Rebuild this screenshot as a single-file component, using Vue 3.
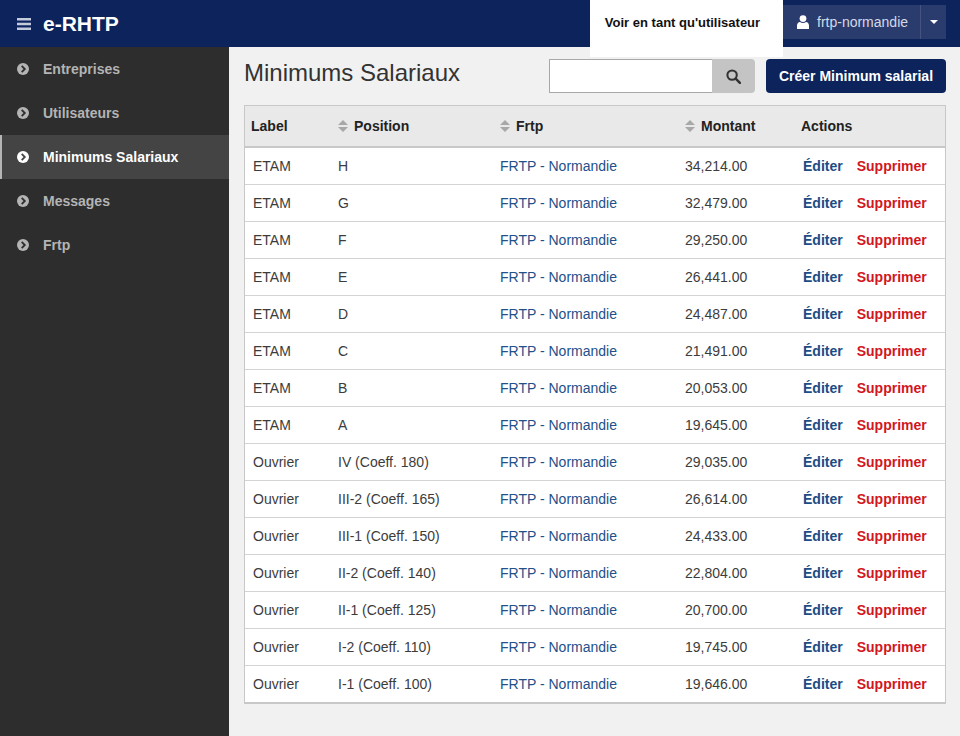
<script setup>
const navItems = [
  { label: 'Entreprises' },
  { label: 'Utilisateurs' },
  { label: 'Minimums Salariaux', active: true },
  { label: 'Messages' },
  { label: 'Frtp' },
]

const rows = [
  ['ETAM', 'H', '34,214.00'],
  ['ETAM', 'G', '32,479.00'],
  ['ETAM', 'F', '29,250.00'],
  ['ETAM', 'E', '26,441.00'],
  ['ETAM', 'D', '24,487.00'],
  ['ETAM', 'C', '21,491.00'],
  ['ETAM', 'B', '20,053.00'],
  ['ETAM', 'A', '19,645.00'],
  ['Ouvrier', 'IV (Coeff. 180)', '29,035.00'],
  ['Ouvrier', 'III-2 (Coeff. 165)', '26,614.00'],
  ['Ouvrier', 'III-1 (Coeff. 150)', '24,433.00'],
  ['Ouvrier', 'II-2 (Coeff. 140)', '22,804.00'],
  ['Ouvrier', 'II-1 (Coeff. 125)', '20,700.00'],
  ['Ouvrier', 'I-2 (Coeff. 110)', '19,745.00'],
  ['Ouvrier', 'I-1 (Coeff. 100)', '19,646.00'],
]
</script>

<template>
  <div class="app">
    <header class="topbar">
      <div class="brand">
        <svg class="burger" viewBox="0 0 14 12" width="14" height="12">
          <path d="M0 0h14v2.400H0zM0 4.800h14v2.400H0zM0 9.600h14V12H0z" fill="#c6cbdb" />
        </svg>
        <span class="brand__name">e-RHTP</span>
      </div>
      <a class="impersonate">Voir en tant qu'utilisateur</a>
      <div class="user">
        <div class="user__name">
          <svg viewBox="0 0 12 14" width="12" height="14">
            <circle cx="6" cy="3.600" r="3.400" fill="#fff" />
            <path d="M0 14v-3.400C0 8.600 1.400 7 3 7c.9.6 1.900 1 3 1s2.100-.4 3-1c1.600 0 3 1.600 3 3.600V14z" fill="#fff" />
          </svg>
          <span>frtp-normandie</span>
        </div>
        <div class="user__caret"></div>
      </div>
    </header>

    <div class="body">
      <aside class="sidebar">
        <a
          v-for="item in navItems"
          :key="item.label"
          class="nav-item"
          :class="{ 'nav-item--active': item.active }"
        >
          <svg class="nav-item__icon" viewBox="0 0 12 12" width="12" height="12">
            <circle cx="6" cy="6" r="6" fill="currentColor" />
            <path d="M4.700 2.900 7.800 6 4.700 9.100" fill="none" :stroke="item.active ? '#444' : '#2d2d2d'" stroke-width="1.800" />
          </svg>
          <span>{{ item.label }}</span>
        </a>
      </aside>

      <main class="content">
        <div class="toolbar">
          <h1 class="title">Minimums Salariaux</h1>
          <div class="search">
            <input class="search__input" type="text" />
            <button class="search__btn" type="button">
              <svg viewBox="0 0 16 16" width="15" height="15">
                <circle cx="6.500" cy="6.500" r="5" fill="none" stroke="#333" stroke-width="2.200" />
                <path d="M10.300 10.300 14.800 14.800" stroke="#333" stroke-width="2.600" stroke-linecap="round" />
              </svg>
            </button>
          </div>
          <button class="create-btn" type="button">Créer Minimum salarial</button>
        </div>

        <table class="table">
          <colgroup>
            <col style="width: 85px" />
            <col style="width: 162px" />
            <col style="width: 185px" />
            <col style="width: 116px" />
            <col style="width: 152px" />
          </colgroup>
          <thead>
            <tr>
              <th class="th-label">Label</th>
              <th v-for="col in ['Position', 'Frtp', 'Montant']" :key="col">
                <svg class="sort" viewBox="0 0 10 12" width="10" height="12">
                  <path d="M5 0 10 5H0zM5 12 0 7h10z" fill="#a8a8a8" />
                </svg>{{ col }}
              </th>
              <th>Actions</th>
            </tr>
          </thead>
          <tbody>
            <tr v-for="row in rows" :key="row[0] + row[1]">
              <td>{{ row[0] }}</td>
              <td>{{ row[1] }}</td>
              <td><a class="link">FRTP - Normandie</a></td>
              <td>{{ row[2] }}</td>
              <td class="actions">
                <a class="edit">Éditer</a>
                <a class="delete">Supprimer</a>
              </td>
            </tr>
          </tbody>
        </table>
      </main>
    </div>
  </div>
</template>

<style>
html,
body {
  margin: 0;
  background: #f1f1f1;
}
</style>

<style scoped>
.app {
  width: 960px;
  height: 736px;
  overflow: hidden;
  font-family: "Liberation Sans", Arial, sans-serif;
  background: #f1f1f1;
}

.topbar {
  height: 47px;
  background: #0c235c;
  display: flex;
  align-items: flex-start;
  position: relative;
  z-index: 2;
}

.brand {
  display: flex;
  align-items: center;
  gap: 12px;
  height: 47px;
  padding-left: 17px;
  margin-right: auto;
}

.brand__name {
  color: #fff;
  font-size: 21px;
  font-weight: 700;
}

.impersonate {
  width: 193px;
  height: 57px;
  padding: 15px 8px 0 0;
  box-sizing: border-box;
  background: #fff;
  color: #111;
  font-size: 13px;
  font-weight: 700;
  line-height: 15px;
  text-align: center;
}

.user {
  display: flex;
  width: 163px;
  height: 34px;
  margin: 5px 14px 0 0;
  background: #2a3b6e;
  color: #d5d9e5;
  font-size: 14px;
}

.user__name {
  flex: 1;
  display: flex;
  align-items: center;
  gap: 8px;
  padding-left: 14px;
}

.user__caret {
  width: 25px;
  border-left: 1px solid #45547f;
  display: flex;
  align-items: center;
  justify-content: center;
}

.user__caret::after {
  content: "";
  border: 4px solid transparent;
  border-top: 4px solid #fff;
  border-bottom: 0;
}

.body {
  display: flex;
  height: 689px;
}

.sidebar {
  width: 229px;
  flex: none;
  background: #2d2d2d;
}

.nav-item {
  display: flex;
  align-items: center;
  gap: 14px;
  height: 44px;
  padding-left: 17px;
  color: #b4b4b4;
  font-size: 14px;
  font-weight: 700;
}

.nav-item--active {
  padding-left: 15px;
  border-left: 2px solid #b4b4b4;
  background: #444;
  color: #fff;
}

.nav-item__icon {
  flex: none;
}

.content {
  flex: 1;
  padding: 12px 14px 0 15px;
}

.toolbar {
  display: flex;
  align-items: flex-start;
  margin-bottom: 12px;
  height: 34px;
}

.title {
  margin: 0 auto 0 0;
  color: #333;
  font-size: 24px;
  font-weight: 400;
  line-height: 27px;
}

.search {
  display: flex;
  height: 34px;
  margin-right: 11px;
}

.search__input {
  width: 163px;
  height: 34px;
  box-sizing: border-box;
  border: 1px solid #a8a8a8;
  border-right: 0;
  background: #fff;
  padding: 0;
  outline: none;
}

.search__btn {
  width: 43px;
  border: 0;
  padding: 0;
  border-radius: 0 4px 4px 0;
  background: #c4c4c4;
  display: flex;
  align-items: center;
  justify-content: center;
}

.create-btn {
  width: 180px;
  height: 34px;
  border: 0;
  padding: 0;
  border-radius: 4px;
  background: #0c235c;
  color: #fff;
  font-family: inherit;
  font-size: 14px;
  font-weight: 700;
}

.table {
  width: 702px;
  table-layout: fixed;
  border-collapse: separate;
  border-spacing: 0;
  border: 1px solid #c8c8c8;
  border-bottom-width: 2px;
  background: #fff;
  font-size: 14px;
  color: #3c3c3c;
}

.table th {
  height: 40px;
  padding: 0 8px;
  background: #e9e9e9;
  border-bottom: 2px solid #c8c8c8;
  color: #222;
  font-weight: 700;
  text-align: left;
}

.table th.th-label {
  padding-left: 6px;
}

.sort {
  margin-right: 6px;
  vertical-align: -1px;
}

.table td {
  height: 36px;
  padding: 0 8px;
  border-bottom: 1px solid #d4d4d4;
}

.table tbody tr:last-child td {
  border-bottom: 0;
}

.link {
  color: #235089;
}

.actions {
  white-space: nowrap;
}

.edit {
  margin-left: 2px;
  color: #1c4c84;
  font-weight: 700;
}

.delete {
  margin-left: 14px;
  color: #d2161e;
  font-weight: 700;
}
</style>
